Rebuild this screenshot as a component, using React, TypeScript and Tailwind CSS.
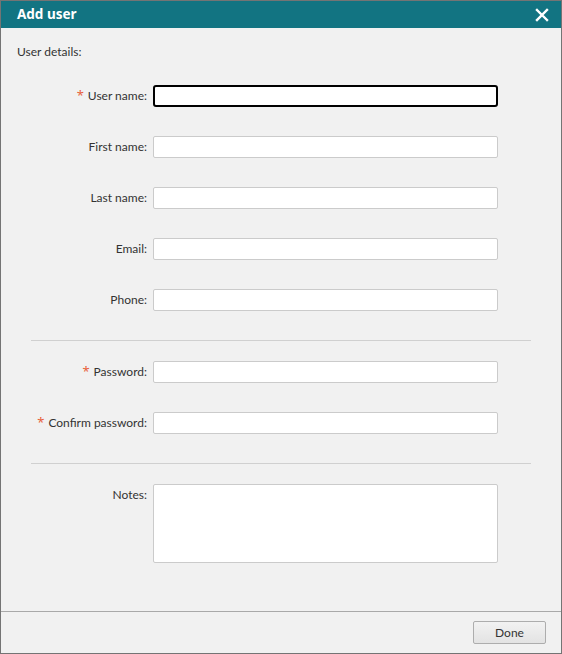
import React from 'react';

type Field = { label: string; required?: boolean; focused?: boolean };

const Row = ({ label, required, focused }: Field) => (
    <div className="flex items-center h-[22px]">
        <div className="w-[147px] text-right pr-[1px] text-[12px] text-[#333] whitespace-nowrap">
            {required && <span className="text-[#e8603c] mr-[4px] text-[13px]" style={{ fontFamily: '"Noto Sans", sans-serif' }}>*</span>}
            {label}:
        </div>
        <input
            type="text"
            className={
                "ml-[5px] w-[345px] h-[22px] bg-white outline-none " +
                (focused ? "border-2 border-black rounded-[3px]" : "border border-[#cbcbcb] rounded-[2px]")
            }
        />
    </div>
);

const App = () => {
    const top: Field[] = [
        { label: 'User name', required: true, focused: true },
        { label: 'First name' },
        { label: 'Last name' },
        { label: 'Email' },
        { label: 'Phone' },
    ];

    return (
        <div className="w-[562px] h-[654px] flex flex-col border border-[#747474] bg-[#f1f1f1]" style={{ fontFamily: '"Segoe UI", Lato, "Noto Sans", sans-serif' }}>
            <div className="h-[27px] bg-[#127482] flex items-center justify-between pl-[16px] pr-[12px]">
                <span className="text-white font-bold text-[13.5px]" style={{ fontFamily: '"Noto Sans", sans-serif' }}>Add user</span>
                <svg width="14" height="14" viewBox="0 0 14 14">
                    <path d="M2 2 L12 12 M12 2 L2 12" stroke="white" strokeWidth="2.4" strokeLinecap="square" />
                </svg>
            </div>

            <div className="flex-1 flex flex-col pt-[16px]">
                <p className="pl-[16px] text-[12px] leading-[16px] text-[#333]">User details:</p>

                <div className="flex flex-col gap-[29px] mt-[25px]">
                    {top.map(f => <Row key={f.label} {...f} />)}
                </div>

                <div className="ml-[30px] w-[500px] h-px bg-[#d0d0d0] mt-[29px]"></div>

                <div className="flex flex-col gap-[29px] mt-[20px]">
                    <Row label="Password" required />
                    <Row label="Confirm password" required />
                </div>

                <div className="ml-[30px] w-[500px] h-px bg-[#d0d0d0] mt-[29px]"></div>

                <div className="flex mt-[20px]">
                    <div className="w-[147px] text-right pr-[1px] text-[12px] text-[#333] pt-[2px]">Notes:</div>
                    <textarea className="ml-[5px] w-[345px] h-[79px] bg-white border border-[#cbcbcb] rounded-[2px] outline-none resize-none"></textarea>
                </div>
            </div>

            <div className="h-[42px] border-t border-[#a9a9a9] flex justify-end items-start pt-[9px] pr-[15px]">
                <button className="w-[73px] h-[23px] border border-[#adadad] rounded-[2px] bg-gradient-to-b from-[#f2f2f2] to-[#e3e3e3] text-[12px] text-[#333]">Done</button>
            </div>
        </div>
    );
};

export default App;
